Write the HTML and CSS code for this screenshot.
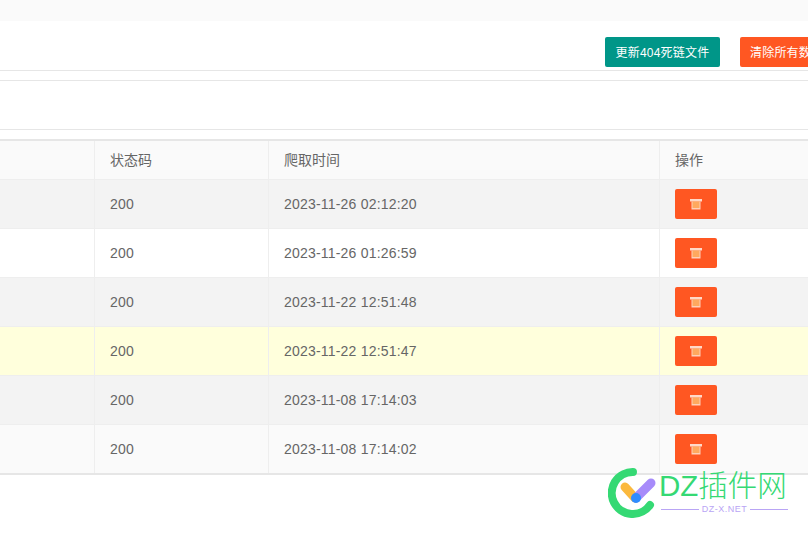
FILE: index.html
```html
<!DOCTYPE html>
<html lang="zh">
<head>
<meta charset="utf-8">
<title>404</title>
<link rel="stylesheet" href="styles.css">
</head>
<body>
<div class="top-band"></div>
<div class="toolbar">
  <button class="btn btn-green">更新404死链文件</button>
  <button class="btn btn-orange">清除所有数据</button>
</div>
<div class="filter"></div>
<div class="table">
  <div class="row head"><div></div><div>状态码</div><div>爬取时间</div><div>操作</div></div>
  <div class="row gray"><div></div><div class="num">200</div><div class="num">2023-11-26 02:12:20</div><div><button class="btn btn-orange del"><svg class="ico" viewBox="0 0 12 12"><path class="lid" d="M0 1h12v2.500h-12z"/><path class="body" d="M1.500 3.500h9v8h-9z"/><path class="fill" d="M2.500 3.500h7v6.500h-7z"/></svg></button></div></div>
  <div class="row white"><div></div><div class="num">200</div><div class="num">2023-11-26 01:26:59</div><div><button class="btn btn-orange del"><svg class="ico" viewBox="0 0 12 12"><path class="lid" d="M0 1h12v2.500h-12z"/><path class="body" d="M1.500 3.500h9v8h-9z"/><path class="fill" d="M2.500 3.500h7v6.500h-7z"/></svg></button></div></div>
  <div class="row gray"><div></div><div class="num">200</div><div class="num">2023-11-22 12:51:48</div><div><button class="btn btn-orange del"><svg class="ico" viewBox="0 0 12 12"><path class="lid" d="M0 1h12v2.500h-12z"/><path class="body" d="M1.500 3.500h9v8h-9z"/><path class="fill" d="M2.500 3.500h7v6.500h-7z"/></svg></button></div></div>
  <div class="row yellow"><div></div><div class="num">200</div><div class="num">2023-11-22 12:51:47</div><div><button class="btn btn-orange del"><svg class="ico" viewBox="0 0 12 12"><path class="lid" d="M0 1h12v2.500h-12z"/><path class="body" d="M1.500 3.500h9v8h-9z"/><path class="fill" d="M2.500 3.500h7v6.500h-7z"/></svg></button></div></div>
  <div class="row gray"><div></div><div class="num">200</div><div class="num">2023-11-08 17:14:03</div><div><button class="btn btn-orange del"><svg class="ico" viewBox="0 0 12 12"><path class="lid" d="M0 1h12v2.500h-12z"/><path class="body" d="M1.500 3.500h9v8h-9z"/><path class="fill" d="M2.500 3.500h7v6.500h-7z"/></svg></button></div></div>
  <div class="row light"><div></div><div class="num">200</div><div class="num">2023-11-08 17:14:02</div><div><button class="btn btn-orange del"><svg class="ico" viewBox="0 0 12 12"><path class="lid" d="M0 1h12v2.500h-12z"/><path class="body" d="M1.500 3.500h9v8h-9z"/><path class="fill" d="M2.500 3.500h7v6.500h-7z"/></svg></button></div></div>
</div>
<div class="logo">
  <svg class="logo-mark" viewBox="0 0 50 50">
    <path d="M25 4A21 21 0 1 0 42 37" fill="none" stroke="#35d974" stroke-width="8" stroke-linecap="round"/>
    <path d="M17 19L27 30" stroke="#fbb93e" stroke-width="9" stroke-linecap="round"/>
    <path d="M28 30L43 15" stroke="#a78bfa" stroke-width="9" stroke-linecap="round"/>
    <circle cx="28" cy="30" r="5" fill="#2f8cff"/>
  </svg>
  <div class="logo-text">
    <div class="logo-name">DZ插件网</div>
    <div class="logo-sub"><span class="rule"></span><span>DZ-X.NET</span><span class="rule"></span></div>
  </div>
</div>
</body>
</html>
```
FILE: styles.css
```css
* { box-sizing: border-box; }
html, body { margin: 0; height: 533px; overflow: hidden; background: #fff; }
body {
  position: relative;
  font-family: "Liberation Sans", "Noto Sans CJK SC", sans-serif;
  font-size: 14px;
  color: #666;
}
.top-band { height: 21px; background: #fafafa; }
.toolbar {
  height: 50px;
  display: flex;
  gap: 20px;
  padding: 16px 0 0 605px;
  overflow: hidden;
  border-bottom: 1px solid #e6e6e6;
}
.btn {
  flex: none;
  height: 30px;
  border: 0;
  border-radius: 2px;
  color: #fff;
  font: 12px "Liberation Sans", "Noto Sans CJK SC", sans-serif;
  letter-spacing: 0.2px;
  padding: 0 10px 1px;
  white-space: nowrap;
}
.btn-green { background: #009688; width: 115px; }
.btn-orange { background: #ff5722; }
.filter {
  margin-top: 9px;
  height: 50px;
  border-top: 1px solid #e6e6e6;
  border-bottom: 1px solid #e6e6e6;
}
.table {
  margin-top: 9px;
  border-top: 2px solid #e6e6e6;
  border-bottom: 2px solid #e6e6e6;
}
.row {
  display: grid;
  grid-template-columns: 95px 174px 391px 1fr;
  height: 49px;
  border-bottom: 1px solid #eee;
}
.row:last-child { border-bottom: 0; height: 48px; }
.row > div {
  display: flex;
  align-items: center;
  padding-left: 15px;
  border-right: 1px solid #eee;
}
.row > div:last-child { border-right: 0; }
.row > .num { letter-spacing: 0.2px; }
.head { height: 39px; background: #fafafa; }
.head > div { padding-bottom: 2px; }
.gray { background: #f3f3f3; }
.white { background: #fff; }
.yellow { background: #ffffdc; }
.light { background: #fafafa; }
.del {
  width: 42px;
  padding: 0;
  display: flex;
  align-items: center;
  justify-content: center;
}
.ico { width: 12px; height: 12px; }
.lid { fill: #ffd9c8; }
.body { fill: #ffd0b8; }
.fill { fill: #ffa95e; }
.logo {
  position: absolute;
  left: 608px;
  top: 468px;
  display: flex;
  gap: 1px;
}
.logo-mark { width: 50px; height: 50px; display: block; }
.logo-text { width: 129px; }
.logo-name {
  font-size: 29.5px;
  font-weight: 300;
  line-height: 36px;
  color: #35d974;
  white-space: nowrap;
}
.logo-sub {
  display: flex;
  align-items: center;
  gap: 3px;
  padding-left: 2px;
  font-size: 9px;
  line-height: 11px;
  letter-spacing: 0.5px;
  color: #b9a5f5;
  white-space: nowrap;
}
.rule { flex: 1; height: 1px; background: #b9a5f5; }
```
